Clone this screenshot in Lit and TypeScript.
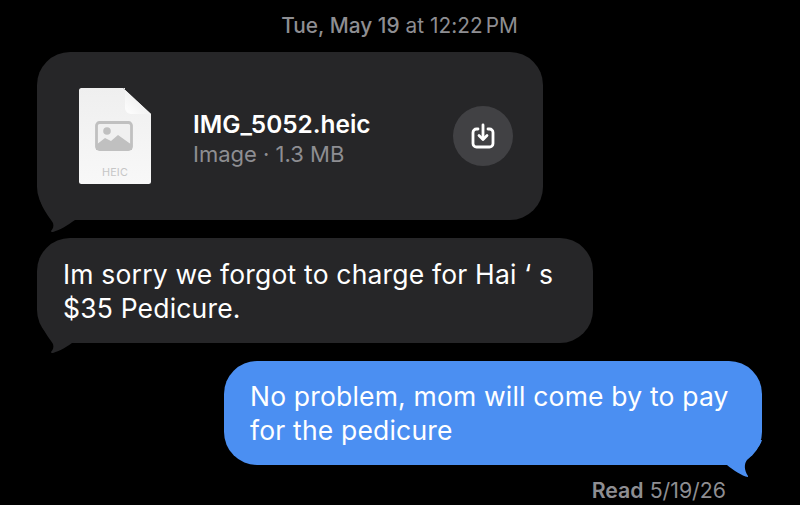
import { LitElement, html, css } from "lit";
import { customElement } from "lit/decorators.js";

@customElement("app-root")
class AppRoot extends LitElement {
  static styles = css`
    :host {
      display: block;
      width: 800px;
      height: 505px;
      overflow: hidden;
      background: #000;
      font-family: Inter, "Liberation Sans", sans-serif;
      color: #fff;
    }
    .thread {
      display: flex;
      flex-direction: column;
      align-items: flex-start;
      padding: 13px 38px 0 37px;
    }
    .date {
      align-self: center;
      height: 26px;
      line-height: 26px;
      font-size: 20.8px;
      letter-spacing: 0.03px;
      color: #8e8e92;
      white-space: nowrap;
    }
    .date b { font-weight: 550; }
    .date .pm { margin-left: 3px; }
    .bubble {
      position: relative;
      box-sizing: border-box;
      border-radius: 33px;
      font-size: 26.5px;
      line-height: 34px;
      letter-spacing: 0.18px;
    }
    .tail { position: absolute; display: block; }
    .in { background: #262628; }
    .in .tail { left: 0; bottom: -14px; }
    .in.msg .tail { bottom: -12px; }
    .file {
      display: flex;
      align-items: center;
      width: 506px;
      height: 168px;
      margin-top: 13px;
      padding: 0 30px 0 42px;
    }
    .doc { flex: none; display: block; margin-right: 42px; }
    .meta { flex: 1; display: flex; flex-direction: column; margin-top: 5px; }
    .name { font-size: 24.4px; font-weight: 600; line-height: 30px; letter-spacing: 0; }
    .size { font-size: 22px; line-height: 30px; color: #8e8e92; letter-spacing: 0; }
    .dl {
      flex: none;
      width: 60px;
      height: 60px;
      border-radius: 50%;
      background: #414144;
      display: flex;
      align-items: center;
      justify-content: center;
    }
    .msg {
      width: 556px;
      margin-top: 18px;
      padding: 19px 26px 18px;
    }
    .out {
      background: #4b8ff2;
      align-self: flex-end;
      width: 538px;
      margin-top: 18px;
      padding: 18px 26px 18px;
    }
    .out .tail { right: 0; bottom: -12px; }
    .read {
      align-self: flex-end;
      margin: 12px 36px 0 0;
      font-size: 21.3px;
      line-height: 26px;
      color: #8e8e92;
    }
    .read b { font-weight: 600; }
  `;

  private inTail() {
    return html`<svg class="tail" width="40" height="40" viewBox="0 0 40 40">
      <path d="M3 6 C5 14 12 23 16 29 C17 32 16 35 14 37 C14 38 15 38 16 38 C23 36 31 31 38 26 L38 6 Z" fill="#262628"/>
    </svg>`;
  }

  render() {
    return html`
      <div class="thread">
        <div class="date"><b>Tue, May 19</b> at 12:22<span class="pm">PM</span></div>

        <div class="bubble in file">
          ${this.inTail()}
          <svg class="doc" width="72" height="96" viewBox="0 0 72 96">
            <defs>
              <linearGradient id="page" x1="0" y1="0" x2="0" y2="1">
                <stop offset="0" stop-color="#efefef"/>
                <stop offset="1" stop-color="#f8f8f8"/>
              </linearGradient>
              <linearGradient id="fold" x1="0" y1="1" x2="1" y2="0">
                <stop offset="0" stop-color="#ffffff"/>
                <stop offset="1" stop-color="#e6e6e6"/>
              </linearGradient>
            </defs>
            <path d="M2.500 0 H44 L72 26 V93.500 a2.500 2.500 0 0 1 -2.500 2.500 H2.500 a2.500 2.500 0 0 1 -2.500 -2.500 V2.500 a2.500 2.500 0 0 1 2.500 -2.500 Z" fill="url(#page)"/>
            <path d="M44 0 L72 26 H52 a6 6 0 0 1 -6 -6 V0 Z" fill="url(#fold)"/>
            <rect x="17.500" y="34.500" width="35" height="27" rx="3" fill="#f0f0f0" stroke="#c0c0c0" stroke-width="2.800"/>
            <path d="M17 62 V57 L26 50 L32 53 L39 47 L53 57 V62 Z" fill="#c0c0c0"/>
            <circle cx="28" cy="43" r="3.800" fill="#c0c0c0"/>
            <text x="36" y="88" text-anchor="middle" font-size="10.800" fill="#c6c6c6" font-family="Inter, sans-serif">HEIC</text>
          </svg>
          <div class="meta">
            <div class="name">IMG_5052.heic</div>
            <div class="size">Image · 1.3 MB</div>
          </div>
          <div class="dl">
            <svg width="24" height="26" viewBox="0 0 24 26" fill="none" stroke="#fff" stroke-width="2.800" stroke-linecap="round" stroke-linejoin="round">
              <path d="M7 6 H5.500 A3.500 3.500 0 0 0 2 9.500 V20.500 A3.500 3.500 0 0 0 5.500 24 H18.500 A3.500 3.500 0 0 0 22 20.500 V9.500 A3.500 3.500 0 0 0 18.500 6 H17"/>
              <path d="M12 2 V16"/>
              <path d="M8 12.500 L12 16.500 L16 12.500"/>
            </svg>
          </div>
        </div>

        <div class="bubble in msg">
          ${this.inTail()}
          Im sorry we forgot to charge for Hai ‘ s<br />$35 Pedicure.
        </div>

        <div class="bubble out">
          <svg class="tail" width="40" height="40" viewBox="0 0 40 40">
            <path d="M40 3 C38 10 30 18 25 23 C22 27 22 33 26 39 L26 40 C20 39 11 33 5 28 L5 3 Z" fill="#4b8ff2"/>
          </svg>
          No problem, mom will come by to pay<br />for the pedicure
        </div>

        <div class="read"><b>Read</b> 5/19/26</div>
      </div>
    `;
  }
}
